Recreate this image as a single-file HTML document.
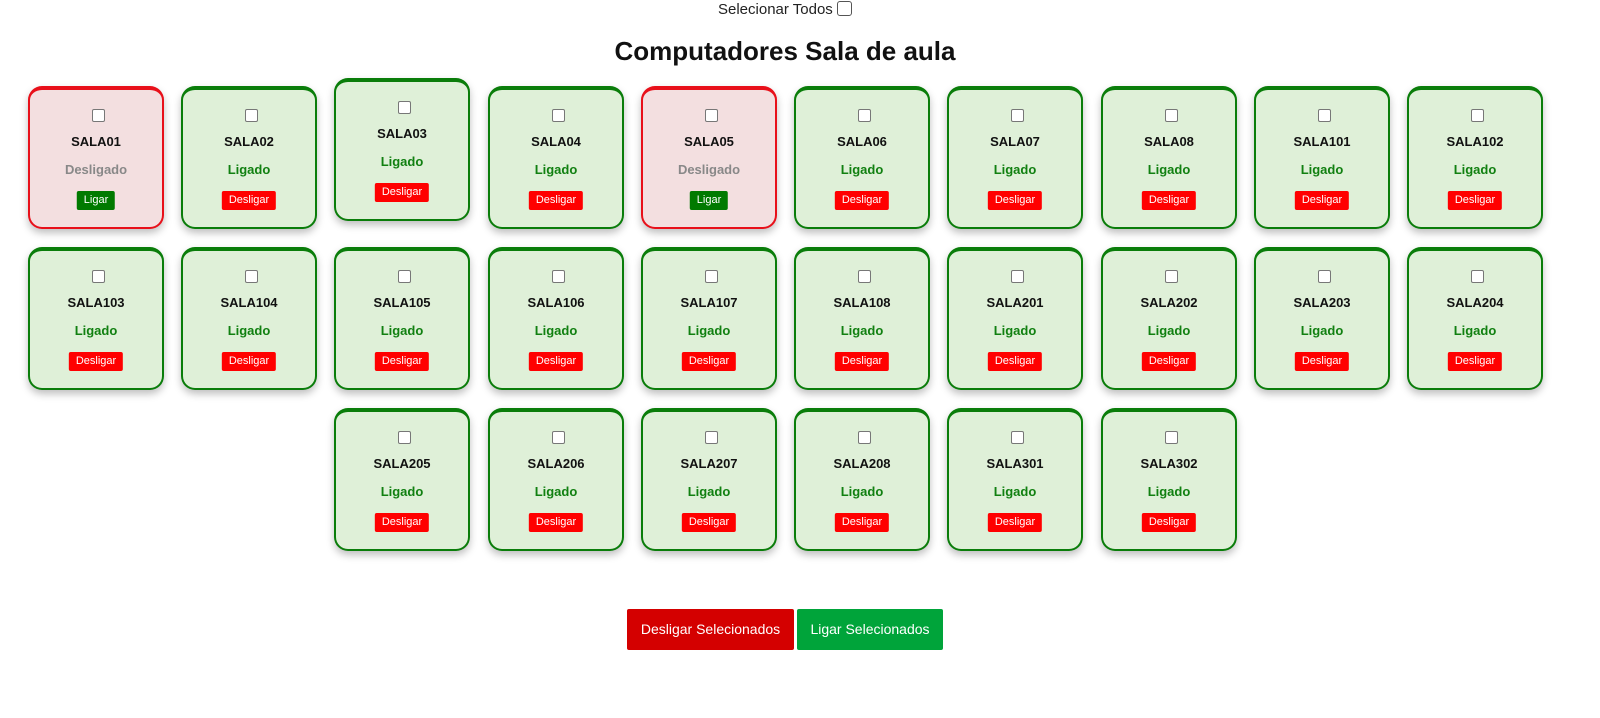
<!DOCTYPE html>
<html><head><meta charset="utf-8"><style>
body{margin:0;width:1600px;height:718px;background:#fff;font-family:"Liberation Sans",Arial,sans-serif;position:relative;overflow:hidden}
.top{position:absolute;top:0;left:0;width:1570px;text-align:center;font-size:15px;color:#222}
.top span{display:inline-block;vertical-align:middle}
.cb{display:inline-block;width:15px;height:15px;border:1px solid #555;border-radius:3px;background:#fff;box-sizing:border-box;vertical-align:middle}
h1{position:absolute;top:36px;left:0;width:1570px;text-align:center;margin:0;font-size:26px;font-weight:bold;color:#111}
.card{position:absolute;width:136px;height:143px;box-sizing:border-box;border:2px solid #0a7d0a;border-top-width:4px;border-radius:14px;background:#dff0d8;box-shadow:0 4px 8px rgba(0,0,0,.25);text-align:center}
.card.off{border-color:#e8101a;background:#f3dfe0}
.card .c{position:absolute;left:62px;top:19px;width:11px;height:11px;border:1px solid #777;border-radius:2px;background:#fff}
.card .n{position:absolute;top:44px;left:0;right:0;font-size:13px;font-weight:bold;color:#111}
.card .s{position:absolute;top:72px;left:0;right:0;font-size:13px;font-weight:bold;color:#118011}
.card.off .s{color:#888}
.card .b{position:absolute;top:101px;left:50%;transform:translateX(-50%);height:19px;line-height:19px;padding:0 7px;font-size:11px;color:#fff;background:#f00;border-radius:2px}
.card.off .b{background:#007a00}
.bb{position:absolute;top:609px;height:41px;line-height:41px;color:#fff;font-size:14px;text-align:center;border-radius:2px}
</style></head><body>
<div class="top"><span style="margin-top:1px">Selecionar Todos</span> <span class="cb" style="margin-top:-2px"></span></div>
<h1>Computadores Sala de aula</h1>
<div id="g"></div>
<div class="bb" style="left:627px;width:167px;background:#d40000">Desligar Selecionados</div>
<div class="bb" style="left:797px;width:146px;background:#00a43a">Ligar Selecionados</div>
<script>
var xs=[28,181,334,488,641,794,947,1101,1254,1407];
var rows=[["SALA01","SALA02","SALA03","SALA04","SALA05","SALA06","SALA07","SALA08","SALA101","SALA102"],
["SALA103","SALA104","SALA105","SALA106","SALA107","SALA108","SALA201","SALA202","SALA203","SALA204"],
[null,null,"SALA205","SALA206","SALA207","SALA208","SALA301","SALA302"]];
var ys=[86,247,408],h="";
rows.forEach(function(r,ri){r.forEach(function(n,ci){if(!n)return;
var off=(n=="SALA01"||n=="SALA05");var y=ys[ri]-(n=="SALA03"?8:0);
h+='<div class="card'+(off?' off':'')+'" style="left:'+xs[ci]+'px;top:'+y+'px"><div class="c"></div><div class="n">'+n+'</div><div class="s">'+(off?'Desligado':'Ligado')+'</div><div class="b">'+(off?'Ligar':'Desligar')+'</div></div>';});});
document.getElementById('g').innerHTML=h;
</script>
</body></html>
